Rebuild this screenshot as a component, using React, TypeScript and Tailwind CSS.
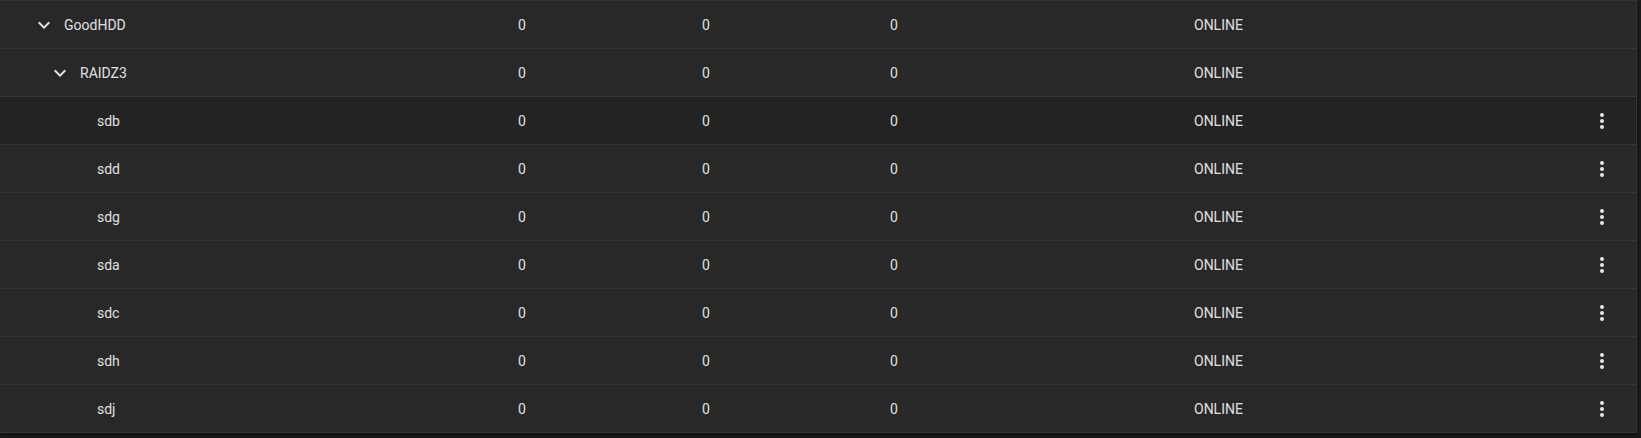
type Row = {
  name: string
  level: number
  expandable?: boolean
  actions?: boolean
  highlight?: boolean
}

const rows: Row[] = [
  { name: 'GoodHDD', level: 0, expandable: true },
  { name: 'RAIDZ3', level: 1, expandable: true },
  { name: 'sdb', level: 2, actions: true, highlight: true },
  { name: 'sdd', level: 2, actions: true },
  { name: 'sdg', level: 2, actions: true },
  { name: 'sda', level: 2, actions: true },
  { name: 'sdc', level: 2, actions: true },
  { name: 'sdh', level: 2, actions: true },
  { name: 'sdj', level: 2, actions: true },
]

const indent = ['pl-[32px]', 'pl-[48px]', 'pl-[97px]']

const ChevronDown = () => (
  <svg viewBox="0 0 24 24" className="w-6 h-6 shrink-0" fill="#e0e0e0">
    <path d="M7.41,8.58L12,13.17L16.59,8.58L18,10L12,16L6,10L7.41,8.58Z" />
  </svg>
)

const DotsVertical = () => (
  <svg viewBox="0 0 24 24" className="w-6 h-6" fill="#e6e6e6">
    <path d="M12,16A2,2 0 0,1 14,18A2,2 0 0,1 12,20A2,2 0 0,1 10,18A2,2 0 0,1 12,16M12,10A2,2 0 0,1 14,12A2,2 0 0,1 12,14A2,2 0 0,1 10,12A2,2 0 0,1 12,10M12,4A2,2 0 0,1 14,6A2,2 0 0,1 12,8A2,2 0 0,1 10,6A2,2 0 0,1 12,4Z" />
  </svg>
)

const TableRow = ({ row }: { row: Row }) => {
  return (
    <div
      className={`grid grid-cols-[518px_184px_188px_304px_1fr] items-center h-12 pt-[1px] border-t border-[#363636] ${
        row.highlight ? 'bg-[#232323]' : 'bg-[#282828]'
      }`}
    >
      <div className={`flex items-center ${indent[row.level]}`}>
        {row.expandable && (
          <span className="mr-[8px] flex">
            <ChevronDown />
          </span>
        )}
        <span>{row.name}</span>
      </div>
      <div>0</div>
      <div>0</div>
      <div>0</div>
      <div className="flex items-center justify-between pr-[22px]">
        <span>ONLINE</span>
        {row.actions && <DotsVertical />}
      </div>
    </div>
  )
}

export default function App() {
  return (
    <div
      className="w-[1641px] h-[438px] bg-[#1c1c1c] text-[14px] text-[#e0e0e0] overflow-hidden"
      style={{ fontFamily: 'Roboto, "Liberation Sans", sans-serif' }}
    >
      <div className="w-[1637px] border-b border-r border-[#363636] shadow-[0_2px_4px_rgba(0,0,0,0.5)]">
        {rows.map((row) => (
          <TableRow key={row.name} row={row} />
        ))}
      </div>
    </div>
  )
}
